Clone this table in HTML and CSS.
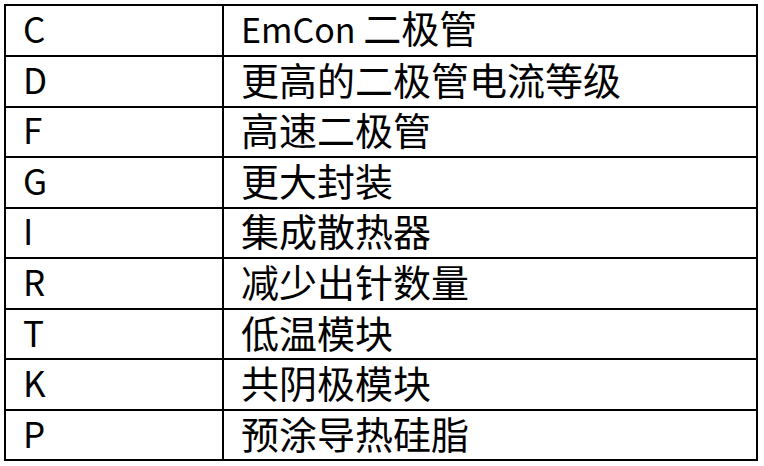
FILE: index.html
```html
<!DOCTYPE html>
<html lang="zh-CN">
<head>
<meta charset="utf-8">
<link rel="stylesheet" href="styles.css">
</head>
<body>
<table class="codes">
  <tbody>
    <tr><td class="code">C</td><td class="desc"><span class="latin">EmCon </span>二极管</td></tr>
    <tr><td class="code">D</td><td class="desc">更高的二极管电流等级</td></tr>
    <tr><td class="code">F</td><td class="desc">高速二极管</td></tr>
    <tr><td class="code">G</td><td class="desc">更大封装</td></tr>
    <tr><td class="code">I</td><td class="desc">集成散热器</td></tr>
    <tr><td class="code">R</td><td class="desc">减少出针数量</td></tr>
    <tr><td class="code">T</td><td class="desc">低温模块</td></tr>
    <tr><td class="code">K</td><td class="desc">共阴极模块</td></tr>
    <tr><td class="code">P</td><td class="desc">预涂导热硅脂</td></tr>
  </tbody>
</table>
</body>
</html>
```

FILE: styles.css
```css
html, body {
  margin: 0;
  padding: 0;
  background: #ffffff;
}

body {
  padding: 4px;
  font-family: "Noto Sans CJK SC", "Noto Sans", sans-serif;
  color: #000000;
}

.codes {
  border-collapse: separate;
  border-spacing: 0;
  border-top: 2px solid #000;
  border-left: 2px solid #000;
  width: 754px;
  table-layout: fixed;
}

.codes td {
  border-right: 2px solid #000;
  border-bottom: 2px solid #000;
  height: 50.56px;
  padding: 0 0 5px 17px;
  box-sizing: border-box;
  font-size: 38px;
  line-height: 42px;
  vertical-align: middle;
  white-space: nowrap;
}

.codes td.code {
  width: 218px;
  font-size: 35px;
  padding-left: 17px;
}

.codes td.desc {
  width: 534px;
}

.latin {
  font-size: 34px;
}
```
